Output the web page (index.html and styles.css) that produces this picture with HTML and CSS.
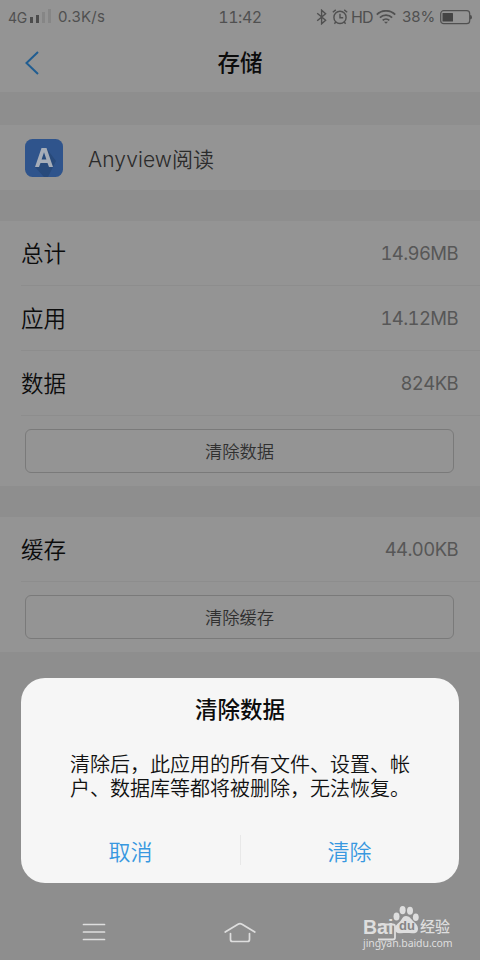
FILE: index.html
```html
<!DOCTYPE html>
<html lang="zh-CN">
<head>
<meta charset="utf-8">
<title>存储</title>
<link rel="stylesheet" href="styles.css">
</head>
<body>
<div class="phone">
  <div class="statusbar">
    <div class="status-left">
      <span class="net">4G</span>
      <svg class="signal" width="21" height="14" viewBox="0 0 21 14"><path d="M0 8h3v6H0z M6 6h3v8H6z" fill="#4c4c4c"/><path d="M12 3h3v11h-3z M18 0h3v14h-3z" fill="#868686"/></svg>
      <span class="speed">0.3K/s</span>
    </div>
    <div class="clock">11:42</div>
    <div class="status-right">
      <svg width="12" height="16" viewBox="0 0 12 16" fill="none" stroke="#505050" stroke-width="1.4"><path d="M1.2 4.2l8.4 7-4 3.6V1.2l4 3.5-8.4 7"/></svg>
      <svg class="alarm" width="16" height="16" viewBox="0 0 16 16" fill="none" stroke="#505050" stroke-width="1.4"><circle cx="8" cy="8.4" r="6.1"/><path d="M8 4.8v4h3.2 M.8 3.2L3.8.9 M12.2.9l3 2.3 M3.8 13l-1.4 1.8 M12.2 13l1.4 1.8"/></svg>
      <span class="hd">HD</span>
      <svg class="wifi" width="20" height="14" viewBox="0 0 20 14" fill="none" stroke="#505050" stroke-width="1.8"><path d="M.8 4.6a13.2 13.2 0 0 1 18.4 0 M3.9 7.6a8.8 8.8 0 0 1 12.2 0 M6.7 10.4a4.8 4.8 0 0 1 6.6 0"/><path d="M8 11.8h4L10 13.8z" fill="#505050" stroke="none"/></svg>
      <span class="percent">38%</span>
      <svg class="battery" width="32" height="15" viewBox="0 0 32 15"><rect x=".7" y=".7" width="29" height="13" rx="3" fill="none" stroke="#505050" stroke-width="1.2"/><rect x="2.5" y="3" width="10.5" height="8.5" rx=".5" fill="#444"/><path d="M30 5q2 0 2 2.3T30 9.6z" fill="#505050"/></svg>
    </div>
  </div>
  <header class="titlebar">
    <svg class="back" width="14" height="24" viewBox="0 0 14 24" fill="none" stroke="#205d91" stroke-width="2"><path d="M13 1L1.5 12 13 23"/></svg>
    <h1>存储</h1>
  </header>
  <section class="panel app">
    <svg class="app-icon" width="38" height="38" viewBox="0 0 38 38"><rect width="38" height="38" rx="7.5" fill="#2f548c"/><path d="M10 28L22 10l9 12-8 16h-4z" fill="#284a7b"/><path d="M10 28L16.500 9h5L28 28h-4l-1.500-4h-7L14 28z M16.600 20.500h4.800L19 13.300z" fill="#a6adb8" fill-rule="evenodd"/></svg>
    <span class="app-name">Anyview阅读</span>
  </section>
  <section class="panel">
    <div class="row"><span class="label">总计</span><span class="value">14.96MB</span></div>
    <div class="row"><span class="label">应用</span><span class="value">14.12MB</span></div>
    <div class="row"><span class="label">数据</span><span class="value">824KB</span></div>
    <button class="clear">清除数据</button>
  </section>
  <section class="panel">
    <div class="row"><span class="label">缓存</span><span class="value">44.00KB</span></div>
    <button class="clear">清除缓存</button>
  </section>

  <div class="dialog">
    <h2>清除数据</h2>
    <p>清除后，此应用的所有文件、设置、帐户、数据库等都将被删除，无法恢复。</p>
    <div class="actions"><button>取消</button><button>清除</button></div>
  </div>

  <nav class="navbar">
    <svg width="24" height="18" viewBox="0 0 24 18" stroke="#dedede" stroke-width="1.700" stroke-linecap="round"><path d="M1.500 1.500h21 M1.500 9h21 M1.500 16.500h21"/></svg>
    <svg class="home" width="32" height="21" viewBox="0 0 32 21" fill="none" stroke="#dedede" stroke-width="1.700" stroke-linecap="round" stroke-linejoin="round"><path d="M1.200 10L14 2.200q2-1.200 4 0L30.800 10 M6.500 11.500v6q0 2 2 2h15q2 0 2-2v-6"/></svg>
    <svg class="recent" width="22" height="18" viewBox="0 0 22 18" fill="none" stroke="#dedede" stroke-width="1.800"><path d="M1 1.500h15q2 0 2 2v11q0 2-2 2H1"/></svg>
  </nav>
  <div class="watermark">
    <div class="brand">
      <span class="bai">Bai</span>
      <span class="paw"><svg width="26" height="28" viewBox="0 0 26 28" fill="#dedede"><ellipse cx="3.500" cy="10.500" rx="3" ry="3.900"/><ellipse cx="9.600" cy="4.200" rx="3" ry="4.100"/><ellipse cx="17" cy="4.800" rx="3" ry="4"/><ellipse cx="22.800" cy="11.300" rx="2.900" ry="3.800"/><path d="M13 10c3.500 0 5 3 7.500 5.500 2.500 2 4.500 4 4.500 7 0 4.500-3 5.100-6 4.700-3-.4-8-.4-11 0-3 .4-6-.6-6-4.700 0-3 3-5 5-7S9.500 10 13 10z"/></svg><b>du</b></span>
      <span class="jy">经验</span>
    </div>
    <div class="url">jingyan.baidu.com</div>
  </div>
</div>
</body>
</html>
```
FILE: styles.css
```css
* { box-sizing: border-box; }
body { margin: 0; font-family: Inter, "Noto Sans CJK SC", sans-serif; color: #0c0c0c; }
button { font: inherit; background: none; border: 0; padding: 0; }
h1, h2, p { margin: 0; }
svg { display: block; flex: none; }

.phone { position: relative; display: flex; flex-direction: column; width: 480px; height: 960px; overflow: hidden; background: #8e8e8e; }

.statusbar { display: grid; grid-template-columns: 1fr auto 1fr; align-items: center; height: 33px; padding: 0 8px; background: #949494; color: #505050; font-size: 15px; line-height: 33px; }
.status-left { display: flex; align-items: center; }
.net { font-size: 14px; width: 22px; padding-top: 1px; letter-spacing: -0.2px; }
.signal { margin-right: 7px; margin-top: -2px; }
.speed { letter-spacing: 0.25px; margin-top: -1px; }
.clock { font-size: 16px; font-variant-numeric: tabular-nums; letter-spacing: -0.5px; }
.status-right { display: flex; align-items: center; justify-content: flex-end; }
.alarm { margin-left: 4px; }
.hd { margin-left: 3px; font-size: 16px; letter-spacing: -1px; width: 21px; }
.wifi { margin-left: 4px; }
.percent { margin-left: 6px; width: 34px; margin-top: -1px; }
.battery { margin-left: 4px; }

.titlebar { display: grid; grid-template-columns: 1fr auto 1fr; align-items: center; height: 59px; padding: 0 25px; background: #949494; }
.titlebar h1 { font-size: 22.500px; font-weight: 500; line-height: 32px; }

.panel { background: #949494; margin-bottom: 31px; }
.app { display: flex; align-items: center; height: 65px; margin-top: 33px; padding-left: 25px; }
.app-name { margin-left: 25px; padding-top: 4px; font-size: 21px; font-weight: 350; line-height: 30px; letter-spacing: 0.1px; color: #2b2b2b; }

.row { display: flex; align-items: center; justify-content: space-between; height: 65px; margin-left: 21px; padding-right: 22px; border-bottom: 1px solid #8d8d8d; }
.label { margin-top: -2px; font-size: 22.500px; font-weight: 350; }
.value { font-size: 18.500px; font-weight: 370; font-variant-numeric: tabular-nums; letter-spacing: -0.6px; color: #575757; }
.clear { display: block; width: 429px; height: 44px; margin: 13px 0 13px 25px; padding-bottom: 1px; border: 1px solid #7a7a7a; border-radius: 6px; font-size: 17.300px; font-weight: 350; color: #303030; }

.dialog { position: absolute; left: 21px; top: 678px; width: 438px; height: 205px; padding-top: 16px; border-radius: 24px; background: #f6f6f6; text-align: center; }
.dialog h2 { font-size: 22.500px; font-weight: 500; line-height: 32px; }
.dialog p { width: 345px; margin: 27px 0 0 49px; font-size: 20px; font-weight: 350; line-height: 24px; text-align: left; color: #111; }
.actions { display: flex; margin-top: 27px; }
.actions button { flex: 1; height: 44px; color: #3898e0; font-size: 22px; font-weight: 350; }
.actions button + button { background: linear-gradient(#e8e8e8, #e8e8e8) 0 50% / 1px 30px no-repeat; }

.navbar { display: flex; align-items: center; height: 56px; margin-top: auto; padding-left: 82px; }
.home { margin-left: 118px; }
.recent { margin-left: 121px; }

.watermark { position: absolute; left: 363px; top: 906px; color: #dedede; }
.brand { display: flex; height: 31px; }
.bai { width: 30px; padding-top: 11px; font: bold 19.500px/21px "Liberation Sans", sans-serif; letter-spacing: 0; }
.paw { position: relative; width: 26px; }
.paw b { position: absolute; left: 6px; top: 12px; font: bold 13px/16px "Liberation Sans", sans-serif; color: #858585; }
.jy { margin-left: 1px; padding-top: 8px; font-size: 15px; font-weight: 500; line-height: 26px; }
.url { font: 10.500px/12px "Noto Sans", sans-serif; letter-spacing: -0.08px; }
```
